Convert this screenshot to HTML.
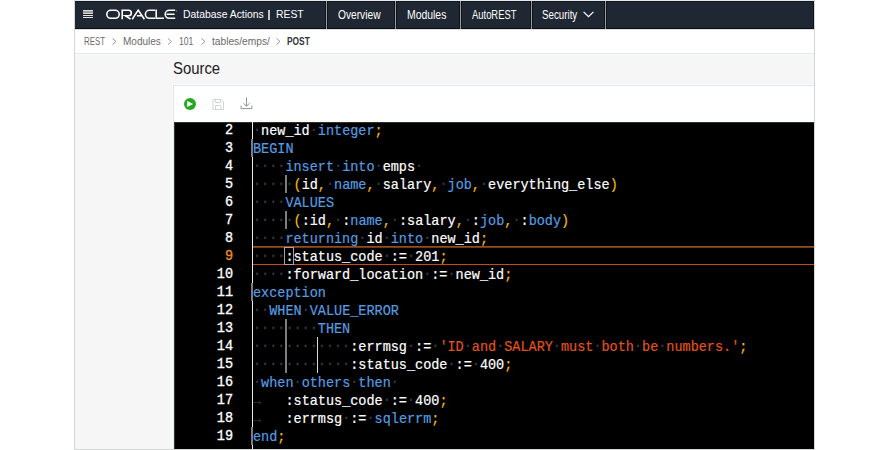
<!DOCTYPE html>
<html><head><meta charset="utf-8">
<style>
*{margin:0;padding:0;box-sizing:border-box}
html,body{width:888px;height:450px;overflow:hidden;background:#fff}
body{position:relative;font-family:"Liberation Sans",sans-serif}
.abs{position:absolute}
#frame{position:absolute;left:74px;top:0;width:741px;height:450px;border:1px solid #d4d6d6;border-top-color:#e6e6e6;background:#fff}
#hdr{position:absolute;left:75px;top:1px;width:739px;height:28px;background:#1f2733;border-top:1px solid #101924;border-bottom:1px solid #0a0d13;border-right:1px solid #0c121a}
.sep{position:absolute;top:1px;width:3px;height:28px;background:#9a9a9a;border-left:1px solid #0e141b;border-right:1px solid #0e141b}
.nav{position:absolute;top:0;height:28px;line-height:30px;color:#fff;font-size:11.5px;white-space:nowrap}
#crumb{position:absolute;left:75px;top:29px;width:739px;height:25px;background:#fff;border-top:1px solid #dcdede;border-bottom:1px solid #e6e9ea}
.bc{position:absolute;top:36px;font-size:10px;line-height:12px;color:#6a6a6a;white-space:nowrap}
.sx{transform-origin:0 0}
#grey{position:absolute;left:75px;top:54px;width:739px;height:395px;background:#f6f6f6;border-top:1px solid #fafbfb}
#src{position:absolute;left:173px;top:60px;font-size:16px;line-height:18px;color:#222;transform:scaleX(0.93);transform-origin:0 0}
#card{position:absolute;left:173px;top:85px;width:641px;height:364px;background:#fff;border:1px solid #e4e7e9;border-right:none;border-bottom:none;box-shadow:-1px -1px 0 #fafcfd}
#ed{position:absolute;left:174px;top:122px;width:640px;height:327px;background:#000;overflow:hidden}
.ln{position:absolute;left:0;width:59px;text-align:right;font-family:"Liberation Mono",monospace;font-size:15px;line-height:18px;height:18px;color:#fff;transform:scaleX(0.9);transform-origin:100% 0;-webkit-text-stroke:0.35px currentColor}
.cl{position:absolute;left:79px;font-family:"Liberation Mono",monospace;font-size:15px;line-height:18px;height:18px;color:#fff;white-space:pre;transform:scaleX(0.9);transform-origin:0 0;-webkit-text-stroke:0.2px currentColor}
.k{color:#569de0}.p{color:#f2b71c}.s{color:#e2531c}.w{color:#383e48;position:relative;top:-1px}.a{color:#2c3038}
.g{position:absolute;width:1px;background:#9b9b9b;height:18px}
</style></head><body>
<div id="frame"></div>
<div id="hdr"></div>
<!-- hamburger -->
<svg class="abs" style="left:83px;top:10px" width="10" height="8" viewBox="0 0 10 8">
<rect x="0" y="0" width="10" height="4" fill="#9c9c9c"/>
<rect x="0" y="0" width="10" height="1" fill="#d8d8d8"/>
<rect x="0" y="3" width="10" height="1" fill="#d8d8d8"/>
<rect x="0" y="5" width="10" height="1" fill="#e4e4e4"/>
<rect x="0" y="7" width="10" height="1" fill="#e4e4e4"/>
</svg>
<!-- ORACLE logo -->
<svg class="abs" style="left:100px;top:5px" width="82" height="18" viewBox="100 5 82 18" fill="none" stroke="#fff" stroke-width="1.6">
<rect x="106.8" y="10.3" width="12.4" height="8" rx="4" ry="4"/>
<path d="M122.2 19.2V10.3H128.6a2.7 2.7 0 0 1 0 5.4H125.2L130.6 19.2"/>
<path d="M132.2 19.2L138.2 10.1L144.4 19.2M136.9 15.7H142.2"/>
<path d="M155 10.3H149.4a4 4 0 0 0 0 8H155"/>
<path d="M156.2 9.6V18.3H164"/>
<path d="M175.2 10.3H169.2a4 4 0 0 0 0 8H175.2M166.6 14.3H174.6"/>
<circle cx="176.8" cy="11" r="0.5" fill="#ccc" stroke="none"/>
</svg>
<div class="nav sx" style="left:183px;top:0px;font-size:10.6px;line-height:28px;transform:scaleX(0.98)">Database Actions</div>
<div class="abs" style="left:268px;top:10px;width:2px;height:10px;background:#c4c4c4"></div>
<div class="nav" style="left:276px;top:1px;font-size:10.4px;line-height:28px">REST</div>
<div class="sep" style="left:325px"></div>
<div class="nav sx" style="left:338px;top:0px;font-size:12.5px;transform:scaleX(0.816)">Overview</div>
<div class="sep" style="left:394px"></div>
<div class="nav sx" style="left:407px;top:0px;font-size:12.5px;transform:scaleX(0.833)">Modules</div>
<div class="sep" style="left:459px"></div>
<div class="nav sx" style="left:472px;top:0px;font-size:12.5px;transform:scaleX(0.753)">AutoREST</div>
<div class="sep" style="left:530px"></div>
<div class="nav sx" style="left:542px;top:0px;font-size:12.5px;transform:scaleX(0.78)">Security</div>
<svg class="abs" style="left:583px;top:11px" width="11" height="7" viewBox="0 0 11 7"><path d="M0.6 0.9L5.5 5.6L10.4 0.9" stroke="#fff" stroke-width="1.25" fill="none"/></svg>
<div class="sep" style="left:604px"></div>

<div id="crumb"></div>
<div class="bc sx" style="left:84px;transform:scaleX(0.785)">REST</div>
<div class="bc sx" style="left:123px;transform:scaleX(1.0)">Modules</div>
<div class="bc sx" style="left:179px;transform:scaleX(0.855)">101</div>
<div class="bc sx" style="left:212px;transform:scaleX(1.02)">tables/emps/</div>
<div class="bc sx" style="left:287px;font-weight:bold;color:#333;transform:scaleX(0.835)">POST</div>
<svg class="abs" style="left:0;top:0" width="888" height="60" fill="none" stroke="#8c8c8c" stroke-width="0.9">
<path d="M112.5 38.5L116 41.5L112.5 44.5M168 38.5L171.5 41.5L168 44.5M201.5 38.5L205 41.5L201.5 44.5M276.5 38.5L280 41.5L276.5 44.5"/>
</svg>

<div id="grey"></div>
<div id="src">Source</div>
<div id="card"></div>
<!-- play icon -->
<svg class="abs" style="left:183px;top:97px" width="14" height="14" viewBox="183 97 14 14">
<circle cx="190" cy="104" r="6" fill="#26a822"/>
<path d="M187.2 100.9L193.1 104L187.2 107.1Z" fill="#fff"/>
</svg>
<!-- save icon -->
<svg class="abs" style="left:212px;top:98px" width="13" height="13" viewBox="0 0 13 13" fill="none" stroke="#d0d5dc" stroke-width="1">
<path d="M1 1.5H9.5L11.5 3.5V11.5H1Z"/>
<path d="M3.5 1.5V4.5H8.5V1.5"/>
<path d="M3.5 11.5V7.5H9V11.5"/>
</svg>
<!-- download icon -->
<svg class="abs" style="left:239px;top:96px" width="15" height="15" viewBox="0 0 15 15" fill="none" stroke="#8e9398" stroke-width="1">
<path d="M7.5 1.5V10"/>
<path d="M4.4 7.2L7.5 10.2L10.6 7.2"/>
<path d="M2.1 9.6V12.6H12.9V9.6"/>
</svg>

<div id="ed">
<div class="abs" style="left:0;top:0;width:640px;height:1px;background:#2c361e"></div>
<div class="abs" style="left:0;top:0;width:1px;height:327px;background:#343a3a"></div>
<div class="g" style="left:78px;top:0;height:327px;background:#ececec"></div>
<div class="abs" style="left:79px;top:124px;width:570px;height:1px;background:#a84418"></div>
<div class="abs" style="left:79px;top:125px;width:570px;height:1px;background:#5a4420"></div>
<div class="abs" style="left:79px;top:142px;width:570px;height:1px;background:#c44a1a"></div>
<div class="ln" style="top:0px;color:#fff">2</div>
<div class="cl" style="top:0.5px"><span class="w">·</span>new_id<span class="w">·</span><span class="k">integer</span><span class="p">;</span></div>
<div class="ln" style="top:18px;color:#fff">3</div>
<div class="cl" style="top:18.5px"><span class="k">BEGIN</span></div>
<div class="ln" style="top:36px;color:#fff">4</div>
<div class="cl" style="top:36.5px"><span class="w">····</span><span class="k">insert</span><span class="w">·</span><span class="k">into</span><span class="w">·</span>emps<span class="w">·</span></div>
<div class="ln" style="top:54px;color:#fff">5</div>
<div class="cl" style="top:54.5px"><span class="w">·····</span><span class="p">(</span>id<span class="p">,</span><span class="w">·</span><span class="k">name</span><span class="p">,</span><span class="w">·</span>salary<span class="p">,</span><span class="w">·</span><span class="k">job</span><span class="p">,</span><span class="w">·</span>everything_else<span class="p">)</span></div>
<div class="ln" style="top:72px;color:#fff">6</div>
<div class="cl" style="top:72.5px"><span class="w">····</span><span class="k">VALUES</span></div>
<div class="ln" style="top:90px;color:#fff">7</div>
<div class="cl" style="top:90.5px"><span class="w">·····</span><span class="p">(</span>:id<span class="p">,</span><span class="w">·</span>:<span class="k">name</span><span class="p">,</span><span class="w">·</span>:salary<span class="p">,</span><span class="w">·</span>:<span class="k">job</span><span class="p">,</span><span class="w">·</span>:<span class="k">body</span><span class="p">)</span></div>
<div class="ln" style="top:108px;color:#fff">8</div>
<div class="cl" style="top:108.5px"><span class="w">····</span><span class="k">returning</span><span class="w">·</span>id<span class="w">·</span><span class="k">into</span><span class="w">·</span>new_id<span class="p">;</span></div>
<div class="ln" style="top:126px;color:#ea8c28">9</div>
<div class="cl" style="top:126.5px"><span class="w">····</span>:status_code<span class="w">·</span>:=<span class="w">·</span>201<span class="p">;</span></div>
<div class="ln" style="top:144px;color:#fff">10</div>
<div class="cl" style="top:144.5px"><span class="w">····</span>:forward_location<span class="w">·</span>:=<span class="w">·</span>new_id<span class="p">;</span></div>
<div class="ln" style="top:162px;color:#fff">11</div>
<div class="cl" style="top:162.5px"><span class="k">exception</span></div>
<div class="ln" style="top:180px;color:#fff">12</div>
<div class="cl" style="top:180.5px"><span class="w">··</span><span class="k">WHEN</span><span class="w">·</span><span class="k">VALUE_ERROR</span></div>
<div class="ln" style="top:198px;color:#fff">13</div>
<div class="cl" style="top:198.5px"><span class="w">········</span><span class="k">THEN</span></div>
<div class="ln" style="top:216px;color:#fff">14</div>
<div class="cl" style="top:216.5px"><span class="w">············</span>:errmsg<span class="w">·</span>:=<span class="w">·</span><span class="s">&#x27;ID</span><span class="w">·</span><span class="s">and</span><span class="w">·</span><span class="s">SALARY</span><span class="w">·</span><span class="s">must</span><span class="w">·</span><span class="s">both</span><span class="w">·</span><span class="s">be</span><span class="w">·</span><span class="s">numbers.&#x27;</span><span class="p">;</span></div>
<div class="ln" style="top:234px;color:#fff">15</div>
<div class="cl" style="top:234.5px"><span class="w">············</span>:status_code<span class="w">·</span>:=<span class="w">·</span>400<span class="p">;</span></div>
<div class="ln" style="top:252px;color:#fff">16</div>
<div class="cl" style="top:252.5px"><span class="w">·</span><span class="k">when</span><span class="w">·</span><span class="k">others</span><span class="w">·</span><span class="k">then</span><span class="w">·</span></div>
<div class="ln" style="top:270px;color:#fff">17</div>
<div class="cl" style="top:270.5px"><span class="a">→</span><span class="w">   </span>:status_code<span class="w">·</span>:=<span class="w">·</span>400<span class="p">;</span></div>
<div class="ln" style="top:288px;color:#fff">18</div>
<div class="cl" style="top:288.5px"><span class="a">→</span><span class="w">   </span>:errmsg<span class="w">·</span>:=<span class="w">·</span><span class="k">sqlerrm</span><span class="p">;</span></div>
<div class="ln" style="top:306px;color:#fff">19</div>
<div class="cl" style="top:306.5px"><span class="k">end</span><span class="p">;</span></div>
<div class="g" style="left:111px;top:53px;width:2px;background:#7e7e7e"></div>
<div class="g" style="left:111px;top:89px;width:2px;background:#7e7e7e"></div>
<div class="g" style="left:111px;top:197px;width:2px;background:#7e7e7e"></div>
<div class="g" style="left:111px;top:215px;width:2px;background:#7e7e7e"></div>
<div class="g" style="left:111px;top:233px;width:2px;background:#7e7e7e"></div>
<div class="g" style="left:143px;top:215px;width:1px;background:#d8d8d8"></div>
<div class="g" style="left:143px;top:233px;width:1px;background:#d8d8d8"></div>
<div class="abs" style="left:77px;top:17px;width:2px;height:18px;background:#7c7c7c"></div>
<div class="abs" style="left:77px;top:161px;width:2px;height:18px;background:#7c7c7c"></div>
<div class="abs" style="left:77px;top:305px;width:2px;height:18px;background:#7c7c7c"></div>
<div class="abs" style="left:110px;top:125px;width:10px;height:18px;border:1.5px solid #a4a4a4"></div>
</div>
</body></html>
